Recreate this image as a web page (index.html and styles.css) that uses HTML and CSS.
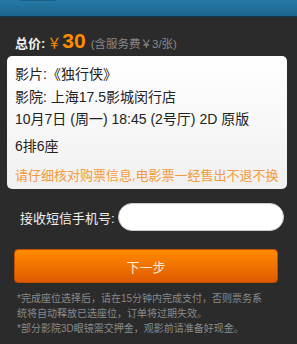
FILE: index.html
```html
<!DOCTYPE html>
<html>
<head>
<meta charset="utf-8">
<link rel="stylesheet" href="styles.css">
</head>
<body>
<div class="header">
  <div class="header-inner">
    <span class="back">返回</span>
    <span class="title">确认订单</span>
  </div>
</div>
<div class="total">
  <span class="total-label">总价:</span>
  <span class="yen">￥</span><span class="amount">30</span>
  <span class="fee">(含服务费￥3/张)</span>
</div>
<div class="card">
  <div class="row">影片:《独行侠》</div>
  <div class="row">影院: 上海17.5影城闵行店</div>
  <div class="row">10月7日 (周一) 18:45 (2号厅) 2D 原版</div>
  <div class="row seat">6排6座</div>
  <div class="warn">请仔细核对购票信息,电影票一经售出不退不换</div>
</div>
<div class="phone">
  <span class="phone-label">接收短信手机号:</span>
  <span class="input"></span>
</div>
<div class="btn">下一步</div>
<div class="notes">
  <p>*完成座位选择后，请在15分钟内完成支付，否则票务系统将自动释放已选座位，订单将过期失效。</p>
  <p>*部分影院3D眼镜需交押金，观影前请准备好现金。</p>
</div>
</body>
</html>
```
FILE: styles.css
```css
* { box-sizing: border-box; }
html, body { margin: 0; padding: 0; }
body {
  background: #2b2b2b;
  font-family: "Liberation Sans", "Noto Sans CJK SC", sans-serif;
  color: #fff;
  width: 297px;
  height: 344px;
  overflow: hidden;
}
.header {
  height: 17px;
  overflow: hidden;
  background: linear-gradient(#2679a6, #1b6690);
  border-bottom: 1px solid #0f3a52;
}
.header-inner {
  height: 44px;
  margin-top: -34px;
  display: flex;
  align-items: center;
  justify-content: center;
}
.back {
  margin-left: 18px;
  margin-right: auto;
  font-size: 12px;
  color: #d8ecf7;
  padding: 4px 8px;
  border-radius: 4px;
  background: #1c5f86;
}
.title {
  font-size: 18px;
  font-weight: bold;
  margin-right: auto;
  margin-left: -50px;
}
.total {
  display: flex;
  align-items: baseline;
  padding: 12px 0 0 15px;
  height: 32px;
}
.total-label { font-size: 13px; font-weight: bold; color: #f2f2f2; }
.yen { font-size: 14px; color: #ff8c00; margin-left: 2px; }
.amount { font-size: 21px; font-weight: bold; color: #ff8c00; margin-left: 1px; }
.fee { font-size: 11.5px; color: #8a8a8a; margin-left: 5px; }
.card {
  margin: 7px 10px 0 7px;
  height: 133px;
  border-radius: 5px;
  background: linear-gradient(#ffffff, #f0f0f0);
  color: #222;
  padding: 7px 0 0 8px;
}
.row {
  font-size: 14px;
  line-height: 22.5px;
}
.seat { margin-top: 4px; }
.warn {
  font-size: 13px;
  color: #f39a3a;
  line-height: 20px;
  margin-top: 9px;
  white-space: nowrap;
}
.phone {
  display: flex;
  align-items: center;
  margin-top: 14px;
  padding-left: 20px;
}
.phone-label { font-size: 13px; color: #f0f0f0; white-space: nowrap; }
.input {
  margin-left: 3px;
  width: 166px;
  height: 28px;
  background: #fff;
  border-radius: 14px;
  border: 1px solid #ccc;
}
.btn {
  margin: 18px 19px 0 14px;
  height: 34px;
  border-radius: 4px;
  background: linear-gradient(#ff8a00, #e05a00);
  border: 1px solid #c24e00;
  display: flex;
  align-items: center;
  justify-content: center;
  font-size: 13px;
  color: #fbe8d6;
}
.notes {
  padding: 8px 26px 0 17px;
  font-size: 10px;
  line-height: 15px;
  color: #8a8a8a;
}
.notes p { margin: 0; }
```
